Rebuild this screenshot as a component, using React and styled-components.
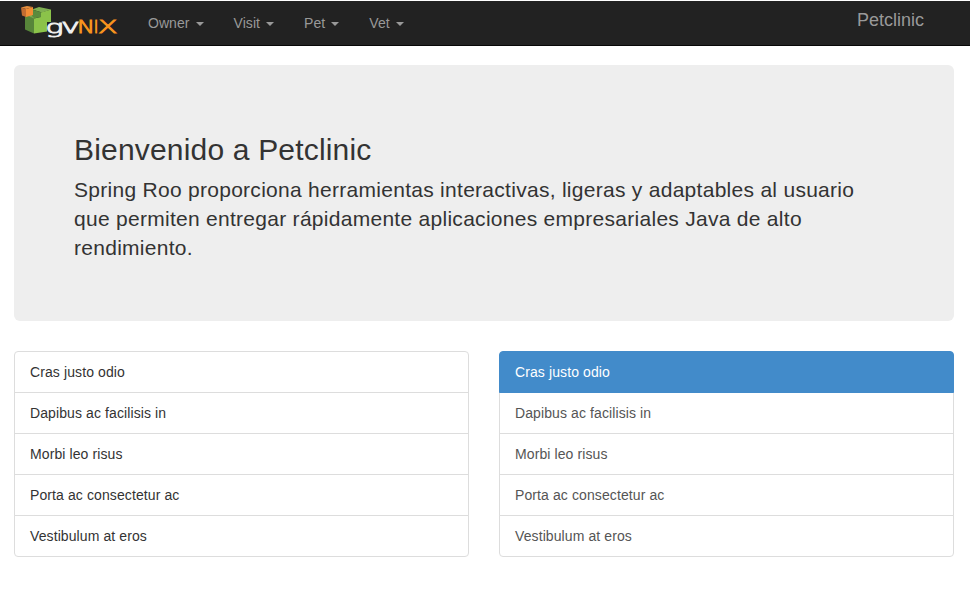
import React from "react";
import styled, { createGlobalStyle } from "styled-components";

const GlobalStyle = createGlobalStyle`
  * { box-sizing: border-box; }
  body {
    margin: 0;
    background: #fff;
    color: #333;
    font: 14px/20px "Liberation Sans", Arial, sans-serif;
  }
`;

const Page = styled.div`
  padding-top: 1px;
  height: 594px;
  overflow: hidden;
`;

const Navbar = styled.nav`
  display: flex;
  height: 45px;
  background: #222;
  border-bottom: 1px solid #080808;
`;

const Logo = styled.svg`
  display: block;
  flex: none;
  width: 133px;
  height: 44px;
`;

const Menu = styled.ul`
  display: flex;
  margin: 0;
  padding: 0;
  list-style: none;
`;

const MenuItem = styled.li`
  display: flex;
  align-items: center;
  gap: 6px;
  height: 44px;
  padding: 0 15px;
  color: #999;
  letter-spacing: 0.06px;
`;

const Caret = styled.span`
  border-top: 4px solid currentColor;
  border-left: 4px solid transparent;
  border-right: 4px solid transparent;
  margin-top: 2px;
`;

const Brand = styled.span`
  margin: 9px 46px 0 auto;
  color: #999;
  font-size: 18px;
  line-height: 20px;
`;

const Content = styled.main`
  padding: 19px 16px 0 14px;
`;

const Jumbotron = styled.section`
  height: 256px;
  padding: 68px 60px 0;
  border-radius: 6px;
  background: #eee;
`;

const Title = styled.h2`
  margin: 0 0 9px;
  font-size: 30px;
  font-weight: 500;
  line-height: 33px;
  letter-spacing: 0.18px;
`;

const Lead = styled.p`
  margin: 0;
  font-size: 21px;
  line-height: 29px;
  letter-spacing: 0.28px;
  white-space: nowrap;
`;

const Columns = styled.div`
  display: grid;
  grid-template-columns: 1fr 1fr;
  gap: 30px;
  margin-top: 30px;
`;

const ListGroup = styled.ul`
  margin: 0;
  padding: 0;
  list-style: none;
  letter-spacing: 0.1px;
`;

const ListItem = styled.li`
  height: 42px;
  margin-bottom: -1px;
  padding: 10px 15px;
  border: 1px solid ${(p) => (p.$active ? "#428bca" : "#ddd")};
  background: ${(p) => (p.$active ? "#428bca" : "#fff")};
  color: ${(p) => (p.$active ? "#fff" : p.$link ? "#555" : "#333")};
  position: relative;
  z-index: ${(p) => (p.$active ? 1 : 0)};
  &:first-child { border-radius: 4px 4px 0 0; }
  &:last-child { border-radius: 0 0 4px 4px; margin-bottom: 0; }
`;

const menus = ["Owner", "Visit", "Pet", "Vet"];
const items = [
  "Cras justo odio",
  "Dapibus ac facilisis in",
  "Morbi leo risus",
  "Porta ac consectetur ac",
  "Vestibulum at eros",
];

function GvnixLogo() {
  return (
    <Logo viewBox="0 1 133 44" role="img" aria-label="gvNIX">
      <path d="M25 15L34 18V33.5L25 29.5Z" fill="#57853a" />
      <path d="M25 15L32 13.5L40 16L34 18.5Z" fill="#79a94f" />
      <path d="M32 9.5L39 7L51 9.5L42 12.5Z" fill="#7fb052" />
      <path d="M32 9.5L42 12.5V17L34 18L32 16Z" fill="#5b8b3c" />
      <path d="M34 18.5L41 17V12.5L51 9.5V22H47V31.5L34 33.5Z" fill="#8bc34a" />
      <path d="M21 7.5L27 6L33 7L26 9Z" fill="#e69040" />
      <path d="M21 7.5L26 9V17L22 15.5Z" fill="#c26d31" />
      <path d="M26 9L33 7V15L26 17Z" fill="#f28d35" />
      <g fontFamily="DejaVu Sans" fontWeight="200">
        <text x="45.5" y="33" fontSize="17" fill="#eee" stroke="#eee" strokeWidth=".9" textLength="18" lengthAdjust="spacingAndGlyphs">g</text>
        <text x="61" y="33" fontSize="19" fill="#eee" stroke="#eee" strokeWidth=".9" textLength="19" lengthAdjust="spacingAndGlyphs">v</text>
        <g fill="#f7941e" stroke="#f7941e" strokeWidth=".9" fontSize="17.5">
          <text x="77" y="33" textLength="18" lengthAdjust="spacingAndGlyphs">N</text>
          <text x="93.5" y="33">I</text>
          <text x="98" y="33" textLength="19.5" lengthAdjust="spacingAndGlyphs">X</text>
        </g>
      </g>
    </Logo>
  );
}

export default function App() {
  return (
    <Page>
      <GlobalStyle />
      <Navbar>
        <GvnixLogo />
        <Menu>
          {menus.map((name) => (
            <MenuItem key={name}>{name}<Caret /></MenuItem>
          ))}
        </Menu>
        <Brand>Petclinic</Brand>
      </Navbar>
      <Content>
        <Jumbotron>
          <Title>Bienvenido a Petclinic</Title>
          <Lead>
            Spring Roo proporciona herramientas interactivas, ligeras y adaptables al usuario<br />
            que permiten entregar rápidamente aplicaciones empresariales Java de alto<br />
            rendimiento.
          </Lead>
        </Jumbotron>
        <Columns>
          <ListGroup>
            {items.map((text) => <ListItem key={text}>{text}</ListItem>)}
          </ListGroup>
          <ListGroup>
            {items.map((text, i) => <ListItem key={text} $link $active={i === 0}>{text}</ListItem>)}
          </ListGroup>
        </Columns>
      </Content>
    </Page>
  );
}
